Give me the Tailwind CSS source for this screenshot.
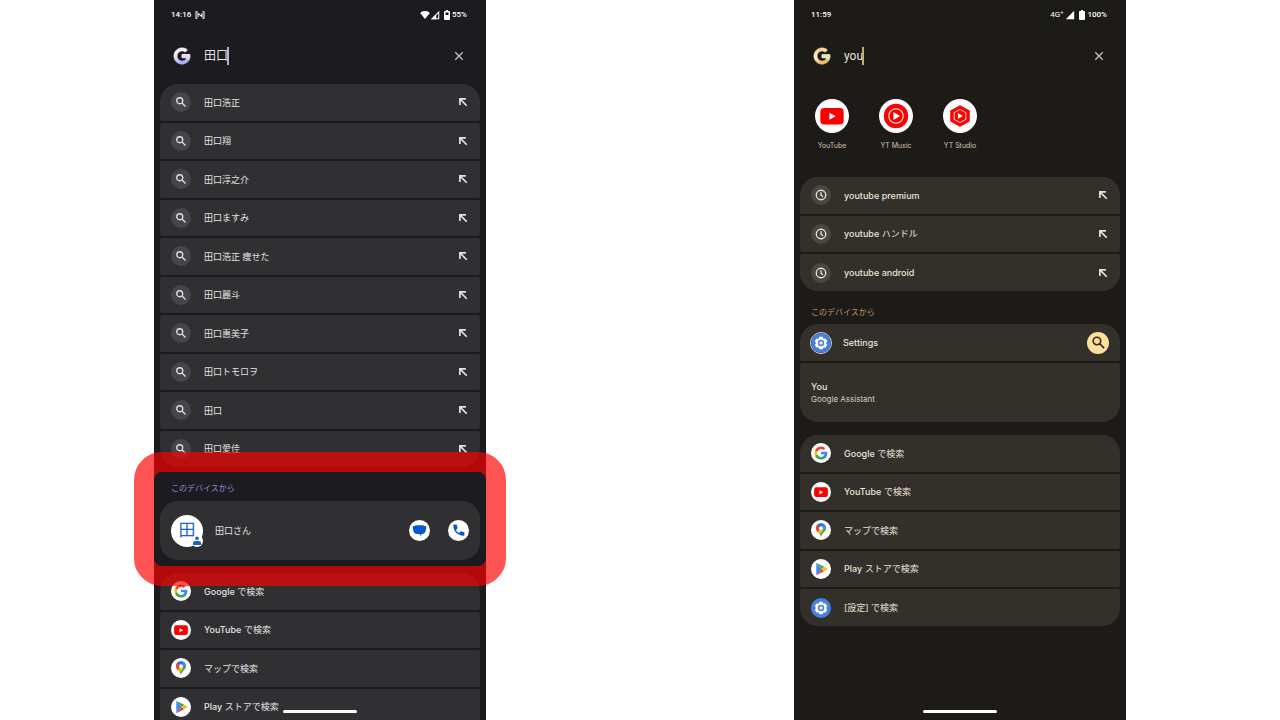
<!DOCTYPE html>
<html lang="ja">
<head>
    <meta charset="utf-8">
    <meta name="viewport" content="width=device-width, initial-scale=1">
    <title>Pixel Launcher search</title>
    <script src="https://cdn.jsdelivr.net/npm/@tailwindcss/browser@4"></script>
</head>
<body class="bg-white font-[family-name:Inter,'Noto_Sans_CJK_JP',sans-serif]">

    <!-- shared icons -->
    <svg class="absolute size-0" aria-hidden="true">
        <defs>
            <linearGradient id="gLilac" x1="0.2" y1="0" x2="0.5" y2="1">
                <stop offset="0.3" stop-color="#f4f2fc"/><stop offset="0.6" stop-color="#dcd3f5"/><stop offset="0.9" stop-color="#a5aef6"/>
            </linearGradient>
            <linearGradient id="gSand" x1="0.2" y1="0" x2="0.5" y2="1">
                <stop offset="0.1" stop-color="#f2cf86"/><stop offset="0.5" stop-color="#fdf3dc"/><stop offset="0.9" stop-color="#e7bb6b"/>
            </linearGradient>
            <symbol id="i-search" viewBox="0 0 24 24"><path fill="none" stroke="currentColor" stroke-width="2.6" d="M9.5 3.5a6 6 0 1 0 0 12 6 6 0 0 0 0-12zM14 14l7 7"/></symbol>
            <symbol id="i-clock" viewBox="0 0 24 24"><circle cx="12" cy="12" r="9.5" fill="none" stroke="currentColor" stroke-width="2.6"/><path fill="none" stroke="currentColor" stroke-width="2.6" d="M12 6.5v6l4 3"/></symbol>
            <symbol id="i-arrow" viewBox="0 0 24 24"><path fill="none" stroke="currentColor" stroke-width="4" d="M4.500 19V4.500H19M4.500 4.500 21 21"/></symbol>
            <symbol id="i-close" viewBox="0 0 24 24"><path fill="none" stroke="currentColor" stroke-width="3" d="m3 3 18 18M21 3 3 21"/></symbol>
            <symbol id="i-signal" viewBox="0 0 24 24"><path fill="currentColor" d="M22 2v20H2z"/></symbol>
            <symbol id="i-signal-low" viewBox="0 0 24 24"><path fill="none" stroke="currentColor" stroke-width="2.5" d="M21 5v16H5z"/><path fill="currentColor" d="M15 10v12H3z"/></symbol>
            <symbol id="i-wifi" viewBox="0 0 24 20"><path fill="currentColor" d="M12 20 0 5C7-1.500 17-1.500 24 5z"/></symbol>
            <symbol id="i-nfc" viewBox="0 0 24 20"><path fill="none" stroke="currentColor" stroke-width="2.6" d="M6 2H2v16h4M18 2h4v16h-4M7 15V6l10 8V5"/></symbol>
            <symbol id="i-battery" viewBox="0 0 12 20"><path fill="currentColor" d="M4 0h4v2h2a2 2 0 0 1 2 2v14a2 2 0 0 1-2 2H2a2 2 0 0 1-2-2V4a2 2 0 0 1 2-2h2z"/></symbol>
            <symbol id="i-battery-half" viewBox="0 0 12 20"><path fill="currentColor" fill-rule="evenodd" d="M4 0h4v2h2a2 2 0 0 1 2 2v14a2 2 0 0 1-2 2H2a2 2 0 0 1-2-2V4a2 2 0 0 1 2-2h2zM3 5v5h6V5z"/></symbol>
            <symbol id="i-g" viewBox="0 0 24 24">
                <path stroke-width=".6" d="M22.560 12.250c0-.78-.07-1.530-.2-2.250H12v4.260h5.920c-.26 1.370-1.040 2.530-2.210 3.310C14.730 18.230 13.480 18.630 12 18.630c-2.860 0-5.290-1.930-6.160-4.530A6.600 6.600 0 0 1 5.840 9.910C6.710 7.310 9.140 5.380 12 5.380c1.620 0 3.060.56 4.210 1.640l3.150-3.150C17.450 2.090 14.970 1 12 1a11 11 0 1 0 7.280 19.340c2.080-1.920 3.280-4.740 3.280-8.090z"/>
                <path fill="currentColor" d="M12 10h10.360c.5 2.800.1 5.200-1 7.500l-4-1.500c.3-.5.500-1.100.56-1.740H12z"/>
            </symbol>
            <symbol id="i-google" viewBox="0 0 32 32">
                <circle cx="16" cy="16" r="16" fill="#fff"/>
                <g transform="translate(4.500 4.500) scale(.96)">
                    <path fill="#4285f4" d="M22.560 12.250c0-.78-.07-1.530-.2-2.250H12v4.260h5.920c-.26 1.370-1.040 2.530-2.210 3.310v2.770h3.570c2.080-1.920 3.280-4.740 3.280-8.090z"/>
                    <path fill="#34a853" d="M12 23c2.970 0 5.460-.98 7.280-2.660l-3.570-2.770c-.98.66-2.230 1.060-3.710 1.060-2.860 0-5.290-1.930-6.160-4.530H2.180v2.840C3.990 20.530 7.700 23 12 23z"/>
                    <path fill="#fbbc05" d="M5.840 14.090c-.22-.66-.35-1.360-.35-2.090s.13-1.430.35-2.090V7.070H2.180C1.430 8.550 1 10.220 1 12s.43 3.450 1.180 4.930l2.850-2.220.81-.62z"/>
                    <path fill="#ea4335" d="M12 5.380c1.620 0 3.060.56 4.210 1.640l3.150-3.150C17.450 2.090 14.970 1 12 1 7.700 1 3.990 3.470 2.180 7.070l3.660 2.840c.87-2.600 3.300-4.530 6.160-4.530z"/>
                </g>
            </symbol>
            <symbol id="i-youtube" viewBox="0 0 32 32">
                <circle cx="16" cy="16" r="16" fill="#fff"/><rect x="5" y="8.500" width="22" height="15.500" rx="3.500" fill="#f00"/><path fill="#fff" d="M13.500 13v6.500l6-3.250z"/>
            </symbol>
            <symbol id="i-music" viewBox="0 0 32 32">
                <circle cx="16" cy="16" r="16" fill="#fff"/><circle cx="16" cy="16" r="11.500" fill="#f00"/><circle cx="16" cy="16" r="6.800" fill="none" stroke="#fff"/><path fill="#fff" d="M13.600 12.200v7.600L19.800 16z"/>
            </symbol>
            <symbol id="i-studio" viewBox="0 0 32 32">
                <circle cx="16" cy="16" r="16" fill="#fff"/><path fill="#f00" stroke="#f00" stroke-width="2" stroke-linejoin="round" d="m16 7 8.200 4.500v9L16 25l-8.200-4.500v-9z"/><path fill="none" stroke="#fff" stroke-width=".8" stroke-linejoin="round" d="m16 9.800 5.500 3v6.400l-5.500 3-5.500-3v-6.400z"/><path fill="#fff" d="M14 13.200v5.600l4.600-2.800z"/>
            </symbol>
            <symbol id="i-maps" viewBox="0 0 32 32">
                <circle cx="16" cy="16" r="16" fill="#fff"/>
                <clipPath id="pin"><path d="M16 5a8 8 0 0 0-8 8c0 6 6.500 7 8 14 1.500-7 8-8 8-14a8 8 0 0 0-8-8z"/></clipPath>
                <g clip-path="url(#pin)"><path fill="#34a853" d="M5 4h22v24H5z"/><path fill="#fbbc04" d="m5 19 11-6 4 4-9 9z"/><path fill="#ea4335" d="M5 6l5 1 6 6-6 7-5-4z"/><path fill="#1a73e8" d="m9 7 7 6 5-8-6-2z"/><path fill="#4285f4" d="m16 13 4-9 6 5-7 8z"/></g>
                <circle cx="16" cy="13" r="3" fill="#fff"/>
            </symbol>
            <symbol id="i-play" viewBox="0 0 32 32">
                <circle cx="16" cy="16" r="16" fill="#fff"/><path fill="#4285f4" d="M8.500 6v20l8.500-10z"/><path fill="#34a853" d="M8.500 6 17 16l4-3.500z"/><path fill="#ea4335" d="M8.500 26 17 16l4 3.500z"/><path fill="#fbbc04" d="m21 12.500 6 3.500-6 3.500-4-3.500z"/>
            </symbol>
            <symbol id="i-gear" viewBox="0 0 32 32">
                <circle cx="16" cy="16" r="16" fill="#4780e0"/>
                <g fill="#fff"><circle cx="16" cy="16" r="8.500"/><rect x="12.800" y="6" width="6.400" height="20" rx="1.500"/><rect x="12.800" y="6" width="6.400" height="20" rx="1.500" transform="rotate(60 16 16)"/><rect x="12.800" y="6" width="6.400" height="20" rx="1.500" transform="rotate(120 16 16)"/></g>
                <circle cx="16" cy="16" r="4" fill="#e3ebfa" stroke="#4780e0" stroke-width="2.200"/>
            </symbol>
            <symbol id="i-message" viewBox="0 0 32 32">
                <circle cx="16" cy="16" r="16" fill="#fff"/><path fill="#0b57d0" d="M12 8h8c2 0 3 .4 4 1.200 1.500 0 2.500 1 2.500 2.800l-.8 3c0 4-2.700 6.500-6.200 6.500L17.500 24l-1.800-2.500H12.500c-3.500 0-6.200-2.500-6.200-6.500L5.500 12c0-1.800 1-2.800 2.500-2.800C9 8.400 10 8 12 8z"/>
            </symbol>
            <symbol id="i-phone" viewBox="0 0 32 32">
                <circle cx="16" cy="16" r="16" fill="#fff"/><path fill="#0b57d0" d="M8 8.500C8 7.500 8.700 7 9.500 7h3.700l1.600 5.700-2.600 2.400c1 2 2.600 3.600 4.700 4.600l2.400-2.600 5.700 1.600v3.800c0 .9-.7 1.500-1.500 1.500C15 24 8 17 8 8.500z"/>
            </symbol>
            <symbol id="i-person" viewBox="0 0 24 24"><circle cx="12" cy="12" r="12" fill="#fff"/><circle cx="12" cy="6.500" r="3.500" fill="#1a5fc8"/><path fill="#1a5fc8" d="M4 20v-4c0-3 3-4.500 8-4.500s8 1.500 8 4.500v4z"/></symbol>
        </defs>
    </svg>

    <div class="grid h-screen grid-cols-2 justify-items-center overflow-hidden">

        <!-- contact search -->
        <main class="relative h-screen w-full max-w-[332px] bg-[#1c1b1f] px-[6px] text-[#e4e1e6]">
            <div class="flex h-[30px] items-center gap-1 pr-[13px] pl-[11px] font-[family-name:Roboto,sans-serif] text-[8px] font-medium text-white">
                <span>14:16</span>
                <svg class="h-2 w-[10px]"><use href="#i-nfc"/></svg>
                <svg class="ml-auto h-2 w-[10px]"><use href="#i-wifi"/></svg>
                <svg class="-ml-1 size-[10px]"><use href="#i-signal-low"/></svg>
                <svg class="h-[10px] w-[6px]"><use href="#i-battery-half"/></svg>
                <span class="-ml-0.5">55%</span>
            </div>
            <form class="mb-[2px] flex h-[52px] items-center pr-[16px] pl-[13px]">
                <svg class="mr-[13px] size-[18px] text-[#f1d9ea]" fill="url(#gLilac)" stroke="url(#gLilac)"><use href="#i-g"/></svg>
                <input type="text" value="田口" aria-label="検索" class="field-sizing-content text-[12px] outline-none">
                <span class="-ml-px h-[18px] w-[2px] bg-[#b4b2dc]"></span>
                <button type="button" aria-label="消去" class="ml-auto"><svg class="size-[10px] text-[#c8c5ca]"><use href="#i-close"/></svg></button>
            </form>
            <ul id="names" class="flex min-h-[383px] flex-col gap-[2px] overflow-hidden rounded-[18px]"></ul>

            <section class="relative -mx-[6px] mt-[5px] rounded-lg px-[6px] pb-[6px]">
                <h2 class="flex h-[29px] items-center px-[11px] pt-[3px] text-[8px] text-[#8f8cd8]">このデバイスから</h2>
                <div class="flex h-[59px] items-center rounded-[18px] bg-[#303032] px-[11px]">
                    <a href="#" class="flex items-center gap-3 text-[9px]">
                        <span class="relative flex size-8 items-center justify-center rounded-full bg-white text-[17px] text-[#2462c4]">田
                            <svg class="absolute right-0 bottom-0 size-3"><use href="#i-person"/></svg>
                        </span>
                        <span>田口さん</span>
                    </a>
                    <button type="button" aria-label="メッセージ" class="ml-auto"><svg class="size-[21px]"><use href="#i-message"/></svg></button>
                    <button type="button" aria-label="電話" class="ml-[18px]"><svg class="size-[21px]"><use href="#i-phone"/></svg></button>
                </div>
                <div class="absolute -inset-x-5 -inset-y-5 rounded-[28px] border-20 border-[#ff0000]/67"></div>
            </section>

            <ul id="leftApps" class="mt-[7px] flex min-h-[152px] flex-col gap-[2px] overflow-hidden rounded-t-[18px]"></ul>
            <div class="absolute bottom-[7px] left-1/2 h-[3px] w-[74px] -translate-x-1/2 rounded-full bg-white"></div>
        </main>

        <!-- app search -->
        <main class="relative h-screen w-full max-w-[332px] bg-[#1d1b17] px-[6px] text-[#e8e2d9]">
            <div class="flex h-[30px] items-center gap-1 pr-[13px] pl-[11px] font-[family-name:Roboto,sans-serif] text-[8px] font-medium text-white">
                <span>11:59</span>
                <span class="ml-auto font-normal">4G⁺</span>
                <svg class="-ml-0.5 size-[10px]"><use href="#i-signal"/></svg>
                <svg class="h-[10px] w-[6px]"><use href="#i-battery"/></svg>
                <span class="-ml-0.5">100%</span>
            </div>
            <form class="mb-[2px] flex h-[52px] items-center pr-[16px] pl-[13px]">
                <svg class="mr-[13px] size-[18px] text-[#cfecc0]" fill="url(#gSand)" stroke="url(#gSand)"><use href="#i-g"/></svg>
                <input type="text" value="you" aria-label="検索" class="field-sizing-content font-[family-name:Roboto,sans-serif] text-[12px] outline-none">
                <span class="-ml-px h-[18px] w-[2px] bg-[#c9aa6c]"></span>
                <button type="button" aria-label="消去" class="ml-auto"><svg class="size-[10px] text-[#cdc5b8]"><use href="#i-close"/></svg></button>
            </form>
            <div id="apps" class="mb-[25px] flex pt-[15px] text-[7px] text-[#cfc6b6]"></div>
            <ul id="history" class="flex min-h-[114px] flex-col gap-[2px] overflow-hidden rounded-[18px]"></ul>
            <h2 class="flex h-[33px] items-center px-[11px] pt-[9px] text-[8px] text-[#b89a5c]">このデバイスから</h2>
            <div class="flex flex-col gap-[2px] overflow-hidden rounded-[18px]">
                <div class="flex h-[37px] items-center rounded-[2px] bg-[#33302b] pr-[11px] pl-[10px]">
                    <a href="#" class="flex items-center gap-[11px] text-[9px] font-medium"><svg class="size-[22px] rounded-full border border-[#c9d3e6]"><use href="#i-gear"/></svg>Settings</a>
                    <button type="button" aria-label="設定を検索" class="ml-auto flex size-[22px] items-center justify-center rounded-full bg-[#fbdf9f] text-[#33290f]"><svg class="size-[15px]"><use href="#i-search"/></svg></button>
                </div>
                <a href="#" class="flex h-[59px] flex-col justify-center rounded-[2px] bg-[#33302b] px-[11px]">
                    <span class="text-[9px] leading-[13px] font-medium">You</span>
                    <span class="text-[8px] leading-[12px] text-[#d5cdbf]">Google Assistant</span>
                </a>
            </div>
            <ul id="rightApps" class="mt-[13px] flex min-h-[191px] flex-col gap-[2px] overflow-hidden rounded-[18px]"></ul>
            <div class="absolute bottom-[7px] left-1/2 h-[3px] w-[74px] -translate-x-1/2 rounded-full bg-white"></div>
        </main>
    </div>

    <script>
        const names = ['田口浩正', '田口翔', '田口淳之介', '田口ますみ', '田口浩正 痩せた', '田口麗斗', '田口惠美子', '田口トモロヲ', '田口', '田口愛佳'];
        const history = ['youtube premium', 'youtube ハンドル', 'youtube android'];
        const targets = [['google', 'Google で検索'], ['youtube', 'YouTube で検索'], ['maps', 'マップで検索'], ['play', 'Play ストアで検索'], ['gear', '[設定] で検索']];
        const apps = [['youtube', 'YouTube'], ['music', 'YT Music'], ['studio', 'YT Studio']];

        function fill(id, items, render) {
            document.getElementById(id).innerHTML = items.map(render).join('');
        }

        // Latin words are medium, Japanese stays regular
        function label(text) {
            return `<span>${text.replace(/[A-Za-z]+/g, '<span class="font-medium">$&</span>')}</span>`;
        }

        function suggestion(text, icon, row, circle) {
            return `<li class="flex flex-1 items-center rounded-[2px] pr-3 pl-[11px] ${row}">
                <a href="#" class="flex flex-1 items-center gap-[13px] text-[9px]">
                    <span class="flex size-5 items-center justify-center rounded-full ${circle}"><svg class="size-3"><use href="#i-${icon}"/></svg></span>${label(text)}
                </a>
                <button type="button" aria-label="${text} を入力"><svg class="size-[10px]"><use href="#i-arrow"/></svg></button>
            </li>`;
        }

        function target([icon, text], row) {
            return `<li class="flex flex-1 items-center rounded-[2px] px-[11px] ${row}">
                <a href="#" class="flex items-center gap-[13px] text-[9px]"><svg class="size-5"><use href="#i-${icon}"/></svg>${label(text)}</a>
            </li>`;
        }

        fill('names', names, n => suggestion(n, 'search', 'bg-[#303032]', 'bg-[#464649]'));
        fill('history', history, h => suggestion(h, 'clock', 'bg-[#33302b]', 'bg-[#4a4640]'));
        fill('leftApps', targets.slice(0, 4), t => target(t, 'bg-[#303032]'));
        fill('rightApps', targets, t => target(t, 'bg-[#33302b]'));
        fill('apps', apps, ([icon, text]) => `<a href="#" class="flex w-16 flex-col items-center gap-[7px] leading-3"><svg class="size-[34px]"><use href="#i-${icon}"/></svg>${text}</a>`);
    </script>
</body>
</html>
